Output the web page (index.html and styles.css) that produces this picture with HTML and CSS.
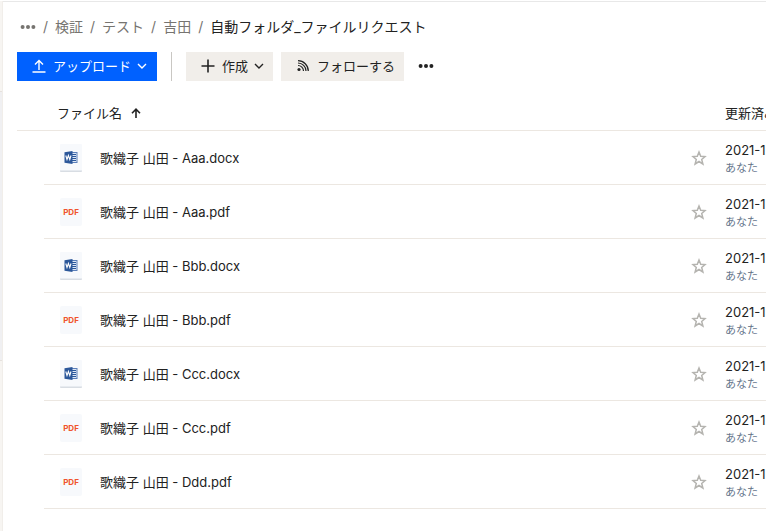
FILE: index.html
```html
<!DOCTYPE html>
<html lang="ja">
<head>
<meta charset="utf-8">
<meta name="viewport" content="width=device-width, initial-scale=1">
<title>自動フォルダ_ファイルリクエスト</title>
<link rel="stylesheet" href="styles.css">
</head>
<body>
<svg class="defs" aria-hidden="true">
  <symbol id="dots" viewBox="0 0 16 6"><circle cx="2.6" cy="3" r="2"/><circle cx="8" cy="3" r="2"/><circle cx="13.4" cy="3" r="2"/></symbol>
  <symbol id="chevron" viewBox="0 0 10 6"><path d="M1 1l4 4 4-4" fill="none" stroke="currentColor" stroke-width="1.4"/></symbol>
  <symbol id="star" viewBox="0 0 16 16"><path d="M8 2l1.700 4.200 4.300.3-3.300 2.900 1.200 4.600L8 11.500 4.100 14l1.200-4.600L2 6.500l4.300-.3z" fill="none" stroke="currentColor" stroke-width="1.500"/></symbol>
  <symbol id="word" viewBox="0 0 22 28">
    <rect width="22" height="28" rx="1" fill="#f7f9fc"/><path d="M0 26.5h22V27a1 1 0 0 1-1 1H1a1 1 0 0 1-1-1z" fill="#d8dde3"/>
    <path d="M12 8h5.500v11H12z" fill="#5b7fb9"/><path d="M12 9h4.500v9H12z" fill="#dfe8f5"/><path d="M12 10.500h4M12 12.500h4M12 14.500h4M12 16.500h4" stroke="#2b579a"/>
    <path d="M4.500 8.200L12.500 7v13l-8-1.200z" fill="#2b579a"/><path d="M5.800 11.500l1.200 4 1.400-4 1.400 4 1.200-4" fill="none" stroke="#fff" stroke-width="1.100"/>
  </symbol>
</svg>
<div class="app">
  <aside class="rail"><div class="rail-top"></div><div class="rail-mid"></div></aside>
  <main class="content">
    <nav class="crumbs" aria-label="パス">
      <button class="plain" aria-label="上位フォルダ"><svg class="dots"><use href="#dots"/></svg></button>
      <span>/</span><a href="#">検証</a><span>/</span><a href="#">テスト</a><span>/</span><a href="#">吉田</a><span>/</span><a href="#" class="current" aria-current="page">自動フォルダ_ファイルリクエスト</a>
    </nav>
    <div class="toolbar">
      <button class="btn primary"><svg class="icon" viewBox="0 0 16 16"><path d="M8 12V3M4 6.500L8 2.500l4 4M1.500 14h13" fill="none" stroke="currentColor" stroke-width="1.400"/></svg>アップロード<svg class="chevron"><use href="#chevron"/></svg></button>
      <span class="divider"></span>
      <button class="btn"><svg class="icon" viewBox="0 0 16 16"><path d="M8 1.500v13M1.500 8h13" stroke="currentColor" stroke-width="1.600"/></svg>作成<svg class="chevron"><use href="#chevron"/></svg></button>
      <button class="btn follow"><svg class="icon" viewBox="0 0 16 16"><circle cx="4" cy="11.500" r="1.600" fill="currentColor"/><path d="M3 7.500a5.500 5.500 0 0 1 5.500 5.500M3 5a8 8 0 0 1 8 8M3 2.700a10.300 10.300 0 0 1 10.300 10.300" fill="none" stroke="currentColor" stroke-width="1.200"/></svg>フォローする</button>
      <button class="plain more" aria-label="その他"><svg class="dots"><use href="#dots"/></svg></button>
    </div>
    <table class="files">
      <colgroup><col class="c-gap"><col class="c-name"><col class="c-star"><col class="c-date"></colgroup>
      <thead><tr><th></th><th scope="col">ファイル名<svg class="sort" viewBox="0 0 10 10"><path d="M5 10V1.500M1 5.200l4-4 4 4" fill="none" stroke="currentColor" stroke-width="1.600"/></svg></th><th></th><th scope="col">更新済み</th></tr></thead>
      <tbody>
        <tr><td></td><td><div class="file"><svg class="doc"><use href="#word"/></svg><a href="#">歌織子 山田 - Aaa.docx</a></div></td><td><button class="plain fav" aria-label="お気に入り"><svg><use href="#star"/></svg></button></td><td class="date"><div>2021-1</div><div class="who">あなた</div></td></tr>
        <tr><td></td><td><div class="file"><span class="doc pdf">PDF</span><a href="#">歌織子 山田 - Aaa.pdf</a></div></td><td><button class="plain fav" aria-label="お気に入り"><svg><use href="#star"/></svg></button></td><td class="date"><div>2021-1</div><div class="who">あなた</div></td></tr>
        <tr><td></td><td><div class="file"><svg class="doc"><use href="#word"/></svg><a href="#">歌織子 山田 - Bbb.docx</a></div></td><td><button class="plain fav" aria-label="お気に入り"><svg><use href="#star"/></svg></button></td><td class="date"><div>2021-1</div><div class="who">あなた</div></td></tr>
        <tr><td></td><td><div class="file"><span class="doc pdf">PDF</span><a href="#">歌織子 山田 - Bbb.pdf</a></div></td><td><button class="plain fav" aria-label="お気に入り"><svg><use href="#star"/></svg></button></td><td class="date"><div>2021-1</div><div class="who">あなた</div></td></tr>
        <tr><td></td><td><div class="file"><svg class="doc"><use href="#word"/></svg><a href="#">歌織子 山田 - Ccc.docx</a></div></td><td><button class="plain fav" aria-label="お気に入り"><svg><use href="#star"/></svg></button></td><td class="date"><div>2021-1</div><div class="who">あなた</div></td></tr>
        <tr><td></td><td><div class="file"><span class="doc pdf">PDF</span><a href="#">歌織子 山田 - Ccc.pdf</a></div></td><td><button class="plain fav" aria-label="お気に入り"><svg><use href="#star"/></svg></button></td><td class="date"><div>2021-1</div><div class="who">あなた</div></td></tr>
        <tr><td></td><td><div class="file"><span class="doc pdf">PDF</span><a href="#">歌織子 山田 - Ddd.pdf</a></div></td><td><button class="plain fav" aria-label="お気に入り"><svg><use href="#star"/></svg></button></td><td class="date"><div>2021-1</div><div class="who">あなた</div></td></tr>
      </tbody>
    </table>
  </main>
</div>
</body>
</html>
```
FILE: styles.css
```css
* { box-sizing: border-box; }
body {
  margin: 0;
  background: #fff;
  color: #222;
  font: 13px/18px Inter, "Noto Sans CJK JP", sans-serif;
}
a { color: inherit; text-decoration: none; }
button { font: inherit; color: inherit; border: 0; padding: 0; cursor: pointer; }
svg { display: block; fill: currentColor; flex: none; }
.defs { position: absolute; width: 0; height: 0; }
.app { display: flex; min-height: 100vh; padding-top: 1px; }
.rail { width: 3px; flex: none; display: flex; flex-direction: column; background: #f7f5f2; border-right: 1px solid #f1eeea; }
.rail-top { height: 90px; }
.rail-mid { height: 270px; background: #f0f0f2; border: solid #e6e2de; border-width: 1px 0; }
.content { flex: 1; min-width: 0; overflow: hidden; border-top: 1px solid #e8e8e8; padding-left: 14px; }
.plain { background: none; display: flex; align-items: center; justify-content: center; }
.dots { width: 16px; height: 6px; }
.crumbs { display: flex; align-items: center; height: 50px; padding-left: 3px; gap: 7px; font-size: 14px; line-height: 20px; color: #767470; white-space: nowrap; }
.current { color: #222; }
.toolbar { display: flex; align-items: center; height: 29px; white-space: nowrap; }
.btn { display: flex; align-items: center; height: 29px; padding: 0 9px 1px 14px; background: #f1eeea; }
.icon { width: 16px; height: 16px; margin-right: 6px; }
.chevron { width: 10px; height: 6px; margin-left: 6px; }
.primary { padding-right: 10px; background: #0061ff; color: #fff; }
.divider { width: 1px; height: 29px; margin: 0 14px; background: #c9c7c3; }
.follow { margin-left: 8px; }
.more { margin-left: 14px; height: 29px; padding-bottom: 1px; }
.files { width: 100%; border-collapse: separate; border-spacing: 0; table-layout: fixed; }
.c-gap { width: 27px; }
.c-star { width: 34px; }
.c-date { width: 41px; }
th, td { padding: 0; white-space: nowrap; border-bottom: 1px solid #ece7e1; }
th { height: 50px; padding-top: 14px; text-align: left; font-weight: 400; }
th:nth-child(2) { padding-left: 13px; }
td { height: 54px; }
td:first-child { border-bottom: 0; }
.date { padding-top: 2px; }
.sort { display: inline-block; width: 10px; height: 10px; margin-left: 9px; }
.file { display: flex; align-items: center; padding-left: 16px; gap: 18px; }
.doc { width: 22px; height: 28px; }
.pdf { display: flex; align-items: center; justify-content: center; padding-top: 1px; background: #f7f9fc; border-radius: 2px; color: #f0532d; font-size: 8px; font-weight: 700; line-height: 8px; }
.fav { color: #b5b4b0; }
.fav svg { width: 16px; height: 16px; }
.who { color: #65758b; font-size: 11px; }
```
